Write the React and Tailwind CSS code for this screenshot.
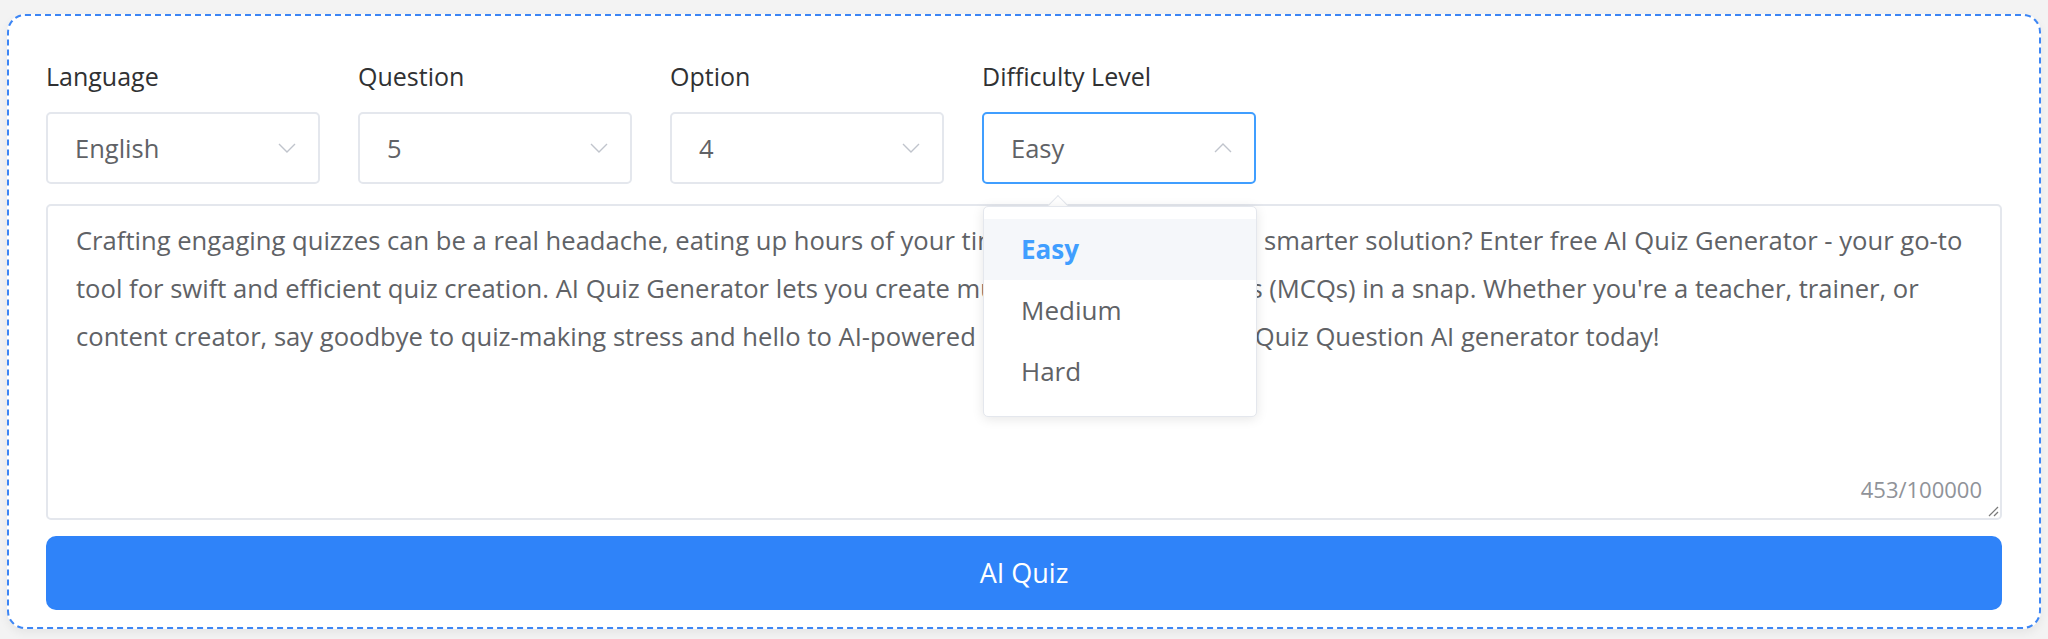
import React from 'react';

const ChevronDown = () => (
  <svg width="18" height="10" viewBox="0 0 18 10" fill="none">
    <polyline points="1,1 9,9 17,1" stroke="#c0c4cc" strokeWidth="1.4" />
  </svg>
);

const ChevronUp = () => (
  <svg width="18" height="10" viewBox="0 0 18 10" fill="none">
    <polyline points="1,9 9,1 17,9" stroke="#c0c4cc" strokeWidth="1.4" />
  </svg>
);

const lines = [
  'Crafting engaging quizzes can be a real headache, eating up hours of your time. What if there was a smarter solution? Enter free AI Quiz Generator - your go-to',
  "tool for swift and efficient quiz creation. AI Quiz Generator lets you create multiple-choice questions (MCQs) in a snap. Whether you're a teacher, trainer, or",
  'content creator, say goodbye to quiz-making stress and hello to AI-powered quiz creations. Try our Quiz Question AI generator today!',
];

const Field = ({ label, value, open }) => (
  <div className="flex flex-col">
    <label className="text-[25px] leading-[30px] text-[#303133] mb-[21px]">{label}</label>
    <div
      className={
        'relative h-[72px] rounded-[5px] bg-white flex items-center justify-between pl-[27px] pr-[22px] border-2 ' +
        (open ? 'border-[#409eff]' : 'border-[#e4e7ed]')
      }
    >
      <span className="text-[25.5px] text-[#606266]">{value}</span>
      {open ? <ChevronUp /> : <ChevronDown />}
      {open && (
        <div className="absolute left-[-1px] top-[92px] w-[274px] z-10">
          <div className="absolute -top-[8px] left-[68px] w-[14px] h-[14px] rotate-45 bg-white border-l border-t border-[#e4e7ed]" />
          <div className="relative bg-white border border-[#e4e7ed] rounded-[5px] shadow-[0_2px_12px_rgba(0,0,0,0.1)] pt-[12px] pb-[14px]">
            <div className="h-[61px] flex items-center pl-[37px] bg-[#f5f7fa] text-[26px] font-bold text-[#409eff]">Easy</div>
            <div className="h-[61px] flex items-center pl-[37px] text-[26px] text-[#606266]">Medium</div>
            <div className="h-[61px] flex items-center pl-[37px] text-[26px] text-[#606266]">Hard</div>
          </div>
        </div>
      )}
    </div>
  </div>
);

export default function App() {
  return (
    <div
      className="w-[2048px] h-[639px] bg-[#f3f3f3] pt-[14px] px-[7px]"
      style={{ fontFamily: '"Open Sans", "Noto Sans", sans-serif' }}
    >
      <div className="h-[615px] bg-white rounded-[18px] border-2 border-dashed border-[#3d86f5] shadow-[0_4px_10px_rgba(0,0,0,0.06)] px-[37px] pt-[45px]">
        <div className="grid grid-cols-[274px_274px_274px_274px] gap-x-[38px]">
          <Field label="Language" value="English" />
          <Field label="Question" value="5" />
          <Field label="Option" value="4" />
          <Field label="Difficulty Level" value="Easy" open />
        </div>
        <div className="relative mt-[20px] h-[316px] rounded-[5px] border-2 border-[#e4e7ed] bg-white pl-[28px] pr-[28px] pt-[11px] overflow-hidden">
          <div className="text-[25.6px] leading-[48px] text-[#606266]">
            {lines.map((l) => (
              <div key={l} className="whitespace-nowrap">{l}</div>
            ))}
          </div>
          <span className="absolute right-[18px] bottom-[12px] text-[22px] text-[#909399]">453/100000</span>
          <svg className="absolute right-[1px] bottom-[1px]" width="12" height="12" viewBox="0 0 12 12">
            <line x1="2" y1="11" x2="11" y2="2" stroke="#7a7a7a" strokeWidth="1.2" />
            <line x1="7" y1="11" x2="11" y2="7" stroke="#7a7a7a" strokeWidth="1.2" />
          </svg>
        </div>
        <button className="mt-[16px] w-full h-[74px] rounded-[10px] bg-[#2f83f9] text-white text-[27px]">AI Quiz</button>
      </div>
    </div>
  );
}
